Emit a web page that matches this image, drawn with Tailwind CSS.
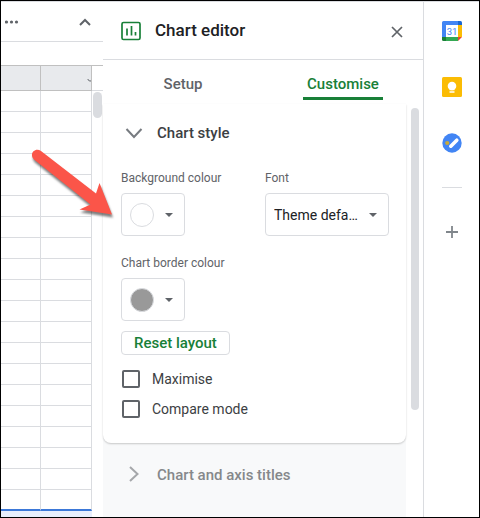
<!DOCTYPE html>
<html lang="en">
<head>
    <meta charset="UTF-8">
    <title>Chart editor</title>
    <script src="https://cdn.jsdelivr.net/npm/@tailwindcss/browser@4"></script>
    <style>
        body {
            font-family: Roboto, 'Liberation Sans', sans-serif;
        }
    </style>
</head>
<body class="relative flex h-screen overflow-hidden border border-black bg-white text-[#202124]">
    <!-- Spreadsheet -->
    <section class="flex w-[102px] shrink-0 flex-col overflow-hidden border-t border-[#dadce0]">
        <div class="flex h-10 shrink-0 items-center justify-between border-b border-[#dadce0] pr-3 pl-1">
            <button aria-label="More">
                <svg class="h-4 w-4" viewBox="0 0 16 16" fill="#5f6368"><circle cx="1.500" cy="8" r="1.600"/><circle cx="6.500" cy="8" r="1.600"/><circle cx="11.500" cy="8" r="1.600"/></svg>
            </button>
            <button aria-label="Hide the menus">
                <svg class="h-3 w-3" viewBox="0 0 12 12" fill="none" stroke="#5f6368" stroke-width="2"><path d="M1 9l5-5 5 5"/></svg>
            </button>
        </div>
        <div class="h-6 shrink-0 border-b border-[#c0c0c0]"></div>
        <div class="flex">
            <table class="w-[91px] shrink-0 table-fixed border-separate border-spacing-0">
                <thead>
                    <tr>
                        <th class="h-[25px] w-10 border-r border-b border-[#c0c0c0] bg-[#e8eaed] p-0"></th>
                        <th class="h-[25px] overflow-hidden border-r border-b border-[#c0c0c0] bg-[#e8eaed] p-0">
                            <svg class="ml-auto h-3 w-1" viewBox="0 0 4 12" fill="none" stroke="#5f6368"><path d="M1 7c0 1.500 1 2 3 2"/></svg>
                        </th>
                    </tr>
                </thead>
                <tbody id="rows"></tbody>
            </table>
            <div class="flex-1 bg-white">
                <div class="h-[25px] border-b border-[#dadce0]"></div>
                <div class="mx-auto mt-px h-[26px] w-[9px] rounded-full bg-[#dadce0]"></div>
            </div>
        </div>
    </section>

    <!-- Chart editor -->
    <main class="flex min-w-0 flex-1 flex-col border-t border-r border-[#dadce0]">
        <header class="flex h-[58px] shrink-0 items-center border-b border-[#dadce0] px-[18px]">
            <svg class="h-5 w-5" viewBox="0 0 20 20" fill="none" stroke="#188038" stroke-width="1.700"><rect x="1" y="1.500" width="18" height="17" rx="1.500"/><path d="M6 7.500v7M10.500 5v9.500M14.500 11v3.500"/></svg>
            <h1 class="ml-3.5 text-[17px] font-medium">Chart editor</h1>
            <button class="ml-auto" aria-label="Close">
                <svg class="h-4 w-4" viewBox="0 0 16 16" fill="none" stroke="#5f6368" stroke-width="1.700"><path d="M3 4l10 10M13 4L3 14"/></svg>
            </button>
        </header>

        <nav class="grid h-11 shrink-0 grid-cols-2 justify-items-center text-[15px] font-medium">
            <button class="mt-1 h-9 border-b-3 border-transparent px-1 pt-2 text-[#5f6368]">Setup</button>
            <button class="mt-1 h-9 border-b-3 border-[#188038] px-1 pt-2 text-[#188038]">Customise</button>
        </nav>

        <div class="flex min-h-0 flex-1">
            <div class="min-w-0 flex-1 bg-[#f8f9fa]">
                <section class="rounded-b-lg bg-white px-[18px] pt-[17px] pb-[22px] shadow-[0_1px_2px_rgba(0,0,0,0.2)]">
                    <h2>
                        <button class="flex h-6 items-center text-[15px] font-medium text-[#3c4043]">
                            <svg class="mr-2.5 h-6 w-[26px]" viewBox="0 0 26 24" fill="none" stroke="#777b80" stroke-width="2"><path d="M5.500 8l7.500 8 7.500-8"/></svg>
                            Chart style
                        </button>
                    </h2>

                    <div class="mt-6 grid grid-cols-[144px_124px] gap-y-[18px]">
                        <div>
                            <label for="background" class="block h-6 pt-px text-xs leading-4 text-[#5f6368]">Background colour</label>
                            <button id="background" class="flex h-[43px] w-16 items-center justify-between rounded-sm border border-[#dadce0] pr-[11px] pl-2">
                                <span class="h-6 w-6 rounded-full border border-[#dadce0] bg-white"></span>
                                <svg class="h-1 w-2" viewBox="0 0 8 4" fill="#5f6368"><path d="M0 0h8L4 4z"/></svg>
                            </button>
                        </div>
                        <div>
                            <label for="font" class="block h-6 pt-px text-xs leading-4 text-[#5f6368]">Font</label>
                            <div class="relative">
                                <select id="font" class="h-[43px] w-full appearance-none overflow-hidden rounded-sm border border-[#dadce0] bg-white pr-7 pl-2 text-sm text-ellipsis whitespace-nowrap">
                                    <option>Theme default</option>
                                </select>
                                <svg class="pointer-events-none absolute top-5 right-3 h-1 w-2" viewBox="0 0 8 4" fill="#5f6368"><path d="M0 0h8L4 4z"/></svg>
                            </div>
                        </div>
                        <div>
                            <label for="border" class="block h-6 pt-px text-xs leading-4 text-[#5f6368]">Chart border colour</label>
                            <button id="border" class="flex h-[43px] w-16 items-center justify-between rounded-sm border border-[#dadce0] pr-[11px] pl-2">
                                <span class="h-6 w-6 rounded-full border border-[#dadce0] bg-[#999999]"></span>
                                <svg class="h-1 w-2" viewBox="0 0 8 4" fill="#5f6368"><path d="M0 0h8L4 4z"/></svg>
                            </button>
                        </div>
                    </div>

                    <button class="mt-2.5 h-6 rounded-sm border border-[#dadce0] px-3 text-[15px] leading-5 font-medium text-[#188038]">Reset layout</button>

                    <div class="mt-3 flex flex-col gap-1.5 text-sm text-[#3c4043]">
                        <label class="flex h-6 items-center gap-3">
                            <input type="checkbox" class="ml-px h-[18px] w-[18px] appearance-none rounded-xs border-2 border-[#5f6368] bg-white">
                            Maximise
                        </label>
                        <label class="flex h-6 items-center gap-3">
                            <input type="checkbox" class="ml-px h-[18px] w-[18px] appearance-none rounded-xs border-2 border-[#5f6368] bg-white">
                            Compare mode
                        </label>
                    </div>
                </section>

                <section class="px-[18px] pt-5">
                    <h2>
                        <button class="flex h-6 items-center text-[15px] font-medium text-[#85888b]">
                            <svg class="mr-2.5 h-6 w-[26px]" viewBox="0 0 26 24" fill="none" stroke="#a5a7aa" stroke-width="2"><path d="M9 4l7.500 7L9 18"/></svg>
                            Chart and axis titles
                        </button>
                    </h2>
                </section>
            </div>
            <div class="w-[17px] shrink-0 px-1 pt-1">
                <div class="ml-px h-[302px] w-2 rounded-full bg-[#dadce0]"></div>
            </div>
        </div>
    </main>

    <!-- Side panel -->
    <aside class="flex w-[55px] shrink-0 flex-col items-center border-t border-[#dadce0] pt-[19px]">
        <button aria-label="Calendar">
            <svg class="h-5 w-5" viewBox="0 0 20 20">
                <path d="M1.500 0H16v4H4v12H0V1.500Q0 0 1.500 0z" fill="#4285f4"/>
                <path d="M16 0h2.500Q20 0 20 1.500V4h-4z" fill="#1967d2"/>
                <path d="M16 4h4v12h-4z" fill="#fbbc04"/>
                <path d="M4 16h12v4H4z" fill="#34a853"/>
                <path d="M0 16h4v4H1.500Q0 20 0 18.500z" fill="#188038"/>
                <path d="M16 16h4l-4 4z" fill="#ea4335"/>
                <path d="M4 4h12v12H4z" fill="#fff"/>
                <text x="10" y="13.500" text-anchor="middle" font-size="9.500" fill="#4285f4">31</text>
            </svg>
        </button>
        <button class="mt-9" aria-label="Keep">
            <svg class="h-5 w-5" viewBox="0 0 20 20">
                <rect width="20" height="20" rx="1.500" fill="#fbbc04"/>
                <circle cx="10" cy="9" r="4.300" fill="#fff"/>
                <path d="M7.500 11h5v2.300h-5zM7.500 14.200h5v1.500h-5z" fill="#fff"/>
            </svg>
        </button>
        <button class="mt-9" aria-label="Tasks">
            <svg class="h-5 w-5" viewBox="0 0 20 20">
                <circle cx="10" cy="10" r="9.700" fill="#4285f4"/>
                <path d="M8.800 13.200l6-6" stroke="#fff" stroke-width="3.600" stroke-linecap="round"/>
                <circle cx="5.200" cy="10" r="2.100" fill="#c9a93a"/>
            </svg>
        </button>
        <hr class="mt-[34px] w-5 border-[#dadce0]">
        <button class="mt-9" aria-label="Get add-ons">
            <svg class="h-4 w-4" viewBox="0 0 16 16" stroke="#80868b" stroke-width="1.800"><path d="M8 2v12M2 8h12"/></svg>
        </button>
    </aside>

    <!-- Pointer arrow over the page -->
    <svg class="pointer-events-none absolute top-[139px] left-[19px] h-24 w-28 drop-shadow-[1px_3px_1px_rgba(0,0,0,0.5)]" viewBox="20 140 112 96" fill="#fb5549">
        <path d="M41 151L96 193.500L99.500 183L112 214.500L79.500 209.500L90.500 204.500L34 159.500C28.500 154 35 147 41 151z"/>
    </svg>

    <script>
        const rows = document.getElementById('rows');

        for (let i = 0; i < 20; i++) {
            const row = document.createElement('tr');
            const last = i === 19;
            const cell = last
                ? '<td class="h-[21px] border-r border-b-2 border-r-[#dadce0] border-b-[#3b78d8] p-0"></td>'
                : '<td class="h-[21px] border-r border-b border-[#dadce0] p-0"></td>';
            row.innerHTML = cell + cell;
            rows.appendChild(row);
        }

        const selected = document.createElement('tr');
        selected.innerHTML = '<td colspan="2" class="h-[21px] bg-[#e8eefc] p-0"></td>';
        rows.appendChild(selected);
    </script>
</body>
</html>
